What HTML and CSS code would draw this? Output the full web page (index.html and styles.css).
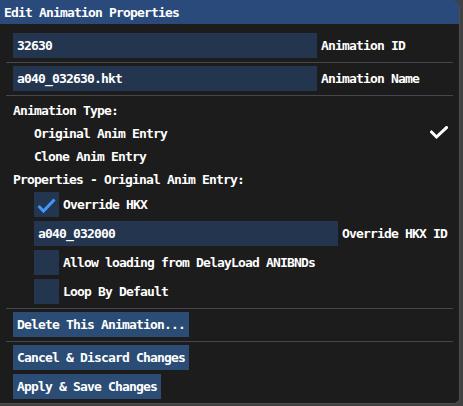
FILE: index.html
```html
<!DOCTYPE html>
<html>
<head>
<meta charset="utf-8">
<link rel="stylesheet" href="styles.css">
</head>
<body>
<div class="window">
  <div class="titlebar">Edit Animation Properties</div>
  <div class="content">
    <div class="field-row first">
      <div class="input">32630</div><span class="label">Animation ID</span>
    </div>
    <div class="sep"></div>
    <div class="field-row after-sep">
      <div class="input">a040_032630.hkt</div><span class="label">Animation Name</span>
    </div>
    <div class="sep"></div>
    <div class="text-row top">Animation Type:</div>
    <div class="text-row indent selectable">
      <span>Original Anim Entry</span>
      <svg class="menu-check" width="18" height="14" viewBox="0 0 18 14"><polyline points="1.5,6 6.5,11 16.5,1.5" fill="none" stroke="#ffffff" stroke-width="3" stroke-linecap="square"/></svg>
    </div>
    <div class="text-row indent">Clone Anim Entry</div>
    <div class="text-row">Properties - Original Anim Entry:</div>
    <div class="check-row indent first-check">
      <span class="box"><svg width="25" height="25" viewBox="0 0 25 25"><polyline points="4.5,14 9.5,19 20.5,7.5" fill="none" stroke="#4296fa" stroke-width="3"/></svg></span>
      <span class="check-label">Override HKX</span>
    </div>
    <div class="field-row indent item">
      <div class="input">a040_032000</div><span class="label">Override HKX ID</span>
    </div>
    <div class="check-row indent item">
      <span class="box"></span>
      <span class="check-label">Allow loading from DelayLoad ANIBNDs</span>
    </div>
    <div class="check-row indent item">
      <span class="box"></span>
      <span class="check-label">Loop By Default</span>
    </div>
    <div class="sep"></div>
    <div class="btn-row after-sep"><span class="btn">Delete This Animation...</span></div>
    <div class="sep"></div>
    <div class="btn-row after-sep"><span class="btn">Cancel &amp; Discard Changes</span></div>
    <div class="btn-row item"><span class="btn">Apply &amp; Save Changes</span></div>
  </div>
</div>
</body>
</html>
```

FILE: styles.css
```css
html, body {
  margin: 0;
  padding: 0;
}
body {
  background: #414141;
  width: 463px;
  height: 406px;
  overflow: hidden;
  font-family: "DejaVu Sans Mono", monospace;
  font-weight: bold;
  font-size: 13px;
  letter-spacing: -0.83px;
  color: #ffffff;
}
.window {
  width: 460px;
  height: 404px;
  background: #1c1c1c;
  border-right: 1px solid #4e4e4e;
  border-bottom: 1px solid #4e4e4e;
  border-radius: 0 6px 6px 0;
  overflow: hidden;
  box-sizing: border-box;
  display: flex;
  flex-direction: column;
}
.titlebar {
  height: 24px;
  line-height: 25px;
  background: #294a7a;
  padding-left: 4px;
  white-space: nowrap;
}
.content {
  padding: 9px 6px 0 13px;
  display: flex;
  flex-direction: column;
}
.field-row, .check-row, .btn-row {
  display: flex;
  align-items: center;
  height: 25px;
  flex: none;
}
.field-row.first { margin-top: 0; }
.after-sep { margin-top: 3px; }
.item { margin-top: 4px; }
.input {
  width: 304px;
  height: 25px;
  background: #23354f;
  display: flex;
  align-items: center;
  padding-left: 4px;
  box-sizing: border-box;
  flex: none;
  white-space: nowrap;
}
.label {
  margin-left: 4px;
  white-space: nowrap;
}
.sep {
  height: 1px;
  background: #46464f;
  margin: 4px 0 0 -7px;
  flex: none;
}
.text-row {
  height: 20px;
  display: flex;
  align-items: center;
  margin-top: 3px;
  white-space: nowrap;
  flex: none;
}
.text-row.top { margin-top: 4px; }
.indent { margin-left: 21px; }
.selectable {
  justify-content: space-between;
}
.menu-check {
  margin-right: 5px;
  margin-top: -1px;
}
.first-check { margin-top: 3px; }
.box {
  width: 25px;
  height: 25px;
  background: #23354f;
  flex: none;
  display: block;
}
.box svg { display: block; }
.check-label {
  margin-left: 4px;
  white-space: nowrap;
}
.btn {
  height: 25px;
  background: #2b4d75;
  padding: 0 4px;
  display: flex;
  align-items: center;
  white-space: nowrap;
}
```
